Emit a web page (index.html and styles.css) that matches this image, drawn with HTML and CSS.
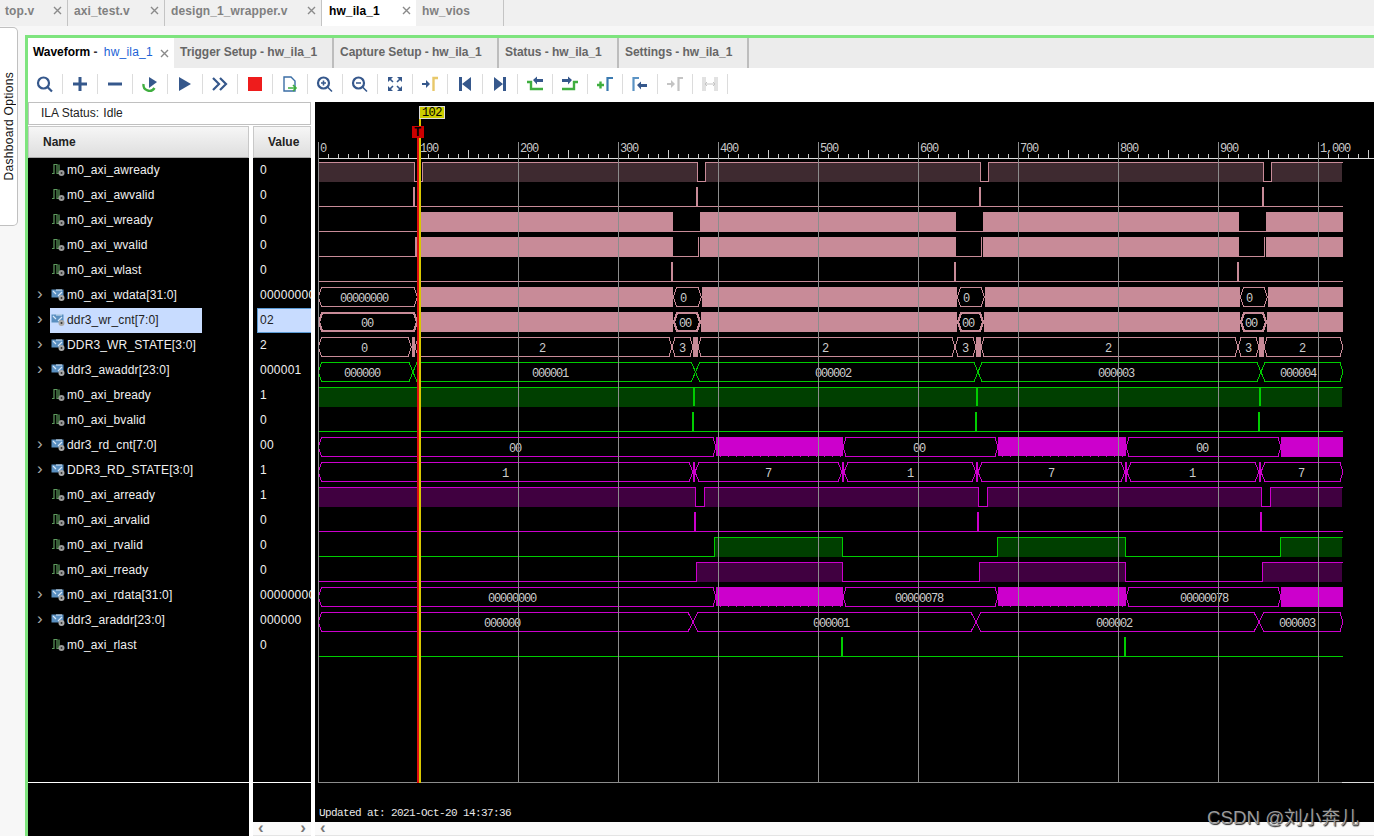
FILE: index.html
```html
<!DOCTYPE html>
<html lang="en">
<head>
  <meta charset="UTF-8">
  <title>hw_ila_1</title>
  <link rel="stylesheet" href="styles.css">
</head>
<body>
  <!-- shared icons -->
  <svg class="defs">
    <symbol id="close" viewBox="0 0 9 9"><path d="M1 1l7 7M8 1l-7 7"/></symbol>
    <symbol id="scalar" viewBox="0 0 15 14">
      <path d="M1 10.5h2V1.5h3v9h2V1.5" fill="none" stroke="#5d9a5d" stroke-width="1.2"/>
      <circle cx="10.5" cy="10" r="3" fill="#999"/><circle cx="10.5" cy="10" r="1" fill="#333"/>
    </symbol>
    <symbol id="bus" viewBox="0 0 15 14">
      <rect x="0.5" y="1.5" width="12" height="8" fill="#5a8fc0"/>
      <path d="M2 3l3 3M5 2h6M7 8l4-4" stroke="#d8e8f8" stroke-width="1.2" fill="none"/>
      <circle cx="10.5" cy="10" r="3" fill="#aaa"/><circle cx="10.5" cy="10" r="1" fill="#333"/>
    </symbol>
  </svg>

  <div class="file-tabs">
    <div class="ftab ftab-top"><span>top.v</span><svg class="x"><use href="#close"/></svg></div>
    <div class="ftab ftab-axi"><span>axi_test.v</span><svg class="x"><use href="#close"/></svg></div>
    <div class="ftab ftab-wrap"><span>design_1_wrapper.v</span><svg class="x"><use href="#close"/></svg></div>
    <div class="ftab ftab-ila active"><span>hw_ila_1</span><svg class="x"><use href="#close"/></svg></div>
    <div class="ftab ftab-vios"><span>hw_vios</span></div>
  </div>

  <div class="workspace">
    <div class="side">
      <div class="dash-tab"><span>Dashboard Options</span></div>
    </div>

    <div class="frame">
      <div class="view-tabs">
        <div class="vtab vtab-wave active"><b>Waveform</b> - <i>hw_ila_1</i><svg class="x"><use href="#close"/></svg></div>
        <div class="vtab vtab-trig">Trigger Setup - hw_ila_1</div>
        <div class="vtab vtab-capt">Capture Setup - hw_ila_1</div>
        <div class="vtab vtab-stat">Status - hw_ila_1</div>
        <div class="vtab vtab-sett">Settings - hw_ila_1</div>
      </div>

      <div class="toolbar">
        <div class="tool"><svg viewBox="0 0 20 20"><circle cx="8.5" cy="9" r="5.5" class="ln"/><path d="M12.5 13l4.5 4.5" class="ln"/></svg></div>
        <div class="tool"><svg viewBox="0 0 20 20"><path d="M3 10h14M10 3v14" class="ln thick"/></svg></div>
        <div class="tool"><svg viewBox="0 0 20 20"><path d="M3 10h14" class="ln thick"/></svg></div>
        <div class="tool"><svg viewBox="0 0 20 20"><path d="M3.5 10a6 6 0 0 0 11 4" class="ln-green"/><path d="M9 3l8 5-8 6z" class="navy"/></svg></div>
        <div class="tool"><svg viewBox="0 0 20 20"><path d="M4 3l12 7-12 7z" class="navy"/></svg></div>
        <div class="tool"><svg viewBox="0 0 20 20"><path d="M3 4l6 6-6 6M10 4l6 6-6 6" class="ln"/></svg></div>
        <div class="tool"><svg viewBox="0 0 20 20"><rect x="3" y="3" width="14" height="14" fill="#ee1c1c"/></svg></div>
        <div class="tool"><svg viewBox="0 0 20 20"><path d="M4 3h7l4 4v10H4z" fill="none" stroke="#3b6ea5" stroke-width="1.4"/><path d="M8 14h8M13 11l3 3-3 3" class="ln-green thin"/></svg></div>
        <div class="tool"><svg viewBox="0 0 20 20"><circle cx="8.5" cy="9" r="5.5" class="ln"/><path d="M12.5 13l4.5 4.5M6 9h5M8.5 6.5v5" class="ln thin"/></svg></div>
        <div class="tool"><svg viewBox="0 0 20 20"><circle cx="8.5" cy="9" r="5.5" class="ln"/><path d="M12.5 13l4.5 4.5M6 9h5" class="ln thin"/></svg></div>
        <div class="tool"><svg viewBox="0 0 20 20"><path d="M3 3h5l-5 5zM17 3h-5l5 5zM3 17h5l-5-5zM17 17h-5l5-5z" class="navy"/><path d="M5 5l3 3M15 5l-3 3M5 15l3-3M15 15l-3-3" class="ln thin"/></svg></div>
        <div class="tool"><svg viewBox="0 0 20 20"><path d="M2 9h4V6l4 4-4 4v-3H2z" class="navy"/><path d="M13.5 17V4H18" fill="none" stroke="#e8c86a" stroke-width="2.4"/></svg></div>
        <div class="tool"><svg viewBox="0 0 20 20"><path d="M4 3h3v14H4zM16 3v14l-9-7z" class="navy"/></svg></div>
        <div class="tool"><svg viewBox="0 0 20 20"><path d="M16 3h-3v14h3zM4 3v14l9-7z" class="navy"/></svg></div>
        <div class="tool"><svg viewBox="0 0 20 20"><path d="M2 8h4v7h12" class="ln-green"/><path d="M8 6l4-3.500v2.500h6v3h-6v2.500z" class="navy"/></svg></div>
        <div class="tool"><svg viewBox="0 0 20 20"><path d="M2 15h12V8h4" class="ln-green"/><path d="M12 6l-4-3.500v2.500H2v3h6v2.500z" class="navy"/></svg></div>
        <div class="tool"><svg viewBox="0 0 20 20"><path d="M2 11h7M5.500 7.500v7" class="ln-green"/><path d="M12.500 17V4H18" fill="none" stroke="#3b7ab0" stroke-width="2.200"/></svg></div>
        <div class="tool"><svg viewBox="0 0 20 20"><path d="M3.500 17V4H9" fill="none" stroke="#5b93c4" stroke-width="2.200"/><path d="M7 11l4-3.500V10h6v3h-6v2.500z" class="navy"/></svg></div>
        <div class="tool"><svg viewBox="0 0 20 20"><path d="M2 9h4V6l4 4-4 4v-3H2z" fill="#c4c4c4"/><path d="M13.500 17V4H18" fill="none" stroke="#c4c4c4" stroke-width="2.200"/></svg></div>
        <div class="tool"><svg viewBox="0 0 20 20"><path d="M3 3v14M5 3v14M15 3v14M17 3v14M5 10h10M7 8l-2 2 2 2M13 8l2 2-2 2" fill="none" stroke="#c4c4c4" stroke-width="1"/></svg></div>
      </div>

      <div class="panes">
        <div class="left">
          <div class="status">ILA Status:&nbsp;&#8202;Idle</div>
          <div class="cols">
            <div class="col col-name">
              <div class="head">Name</div>
              <div class="rows">
                <div class="row"><span class="exp"></span><span class="sig"><svg class="ic"><use href="#scalar"/></svg>m0_axi_awready</span></div>
                <div class="row"><span class="exp"></span><span class="sig"><svg class="ic"><use href="#scalar"/></svg>m0_axi_awvalid</span></div>
                <div class="row"><span class="exp"></span><span class="sig"><svg class="ic"><use href="#scalar"/></svg>m0_axi_wready</span></div>
                <div class="row"><span class="exp"></span><span class="sig"><svg class="ic"><use href="#scalar"/></svg>m0_axi_wvalid</span></div>
                <div class="row"><span class="exp"></span><span class="sig"><svg class="ic"><use href="#scalar"/></svg>m0_axi_wlast</span></div>
                <div class="row"><span class="exp">›</span><span class="sig"><svg class="ic"><use href="#bus"/></svg>m0_axi_wdata[31:0]</span></div>
                <div class="row"><span class="exp">›</span><span class="sig selected"><svg class="ic"><use href="#bus"/></svg>ddr3_wr_cnt[7:0]</span></div>
                <div class="row"><span class="exp">›</span><span class="sig"><svg class="ic"><use href="#bus"/></svg>DDR3_WR_STATE[3:0]</span></div>
                <div class="row"><span class="exp">›</span><span class="sig"><svg class="ic"><use href="#bus"/></svg>ddr3_awaddr[23:0]</span></div>
                <div class="row"><span class="exp"></span><span class="sig"><svg class="ic"><use href="#scalar"/></svg>m0_axi_bready</span></div>
                <div class="row"><span class="exp"></span><span class="sig"><svg class="ic"><use href="#scalar"/></svg>m0_axi_bvalid</span></div>
                <div class="row"><span class="exp">›</span><span class="sig"><svg class="ic"><use href="#bus"/></svg>ddr3_rd_cnt[7:0]</span></div>
                <div class="row"><span class="exp">›</span><span class="sig"><svg class="ic"><use href="#bus"/></svg>DDR3_RD_STATE[3:0]</span></div>
                <div class="row"><span class="exp"></span><span class="sig"><svg class="ic"><use href="#scalar"/></svg>m0_axi_arready</span></div>
                <div class="row"><span class="exp"></span><span class="sig"><svg class="ic"><use href="#scalar"/></svg>m0_axi_arvalid</span></div>
                <div class="row"><span class="exp"></span><span class="sig"><svg class="ic"><use href="#scalar"/></svg>m0_axi_rvalid</span></div>
                <div class="row"><span class="exp"></span><span class="sig"><svg class="ic"><use href="#scalar"/></svg>m0_axi_rready</span></div>
                <div class="row"><span class="exp">›</span><span class="sig"><svg class="ic"><use href="#bus"/></svg>m0_axi_rdata[31:0]</span></div>
                <div class="row"><span class="exp">›</span><span class="sig"><svg class="ic"><use href="#bus"/></svg>ddr3_araddr[23:0]</span></div>
                <div class="row"><span class="exp"></span><span class="sig"><svg class="ic"><use href="#scalar"/></svg>m0_axi_rlast</span></div>
              </div>
              <div class="foot"></div>
            </div>
            <div class="col col-value">
              <div class="head">Value</div>
              <div class="rows">
                <div class="val">0</div>
                <div class="val">0</div>
                <div class="val">0</div>
                <div class="val">0</div>
                <div class="val">0</div>
                <div class="val">00000000</div>
                <div class="val selected">02</div>
                <div class="val">2</div>
                <div class="val">000001</div>
                <div class="val">1</div>
                <div class="val">0</div>
                <div class="val">00</div>
                <div class="val">1</div>
                <div class="val">1</div>
                <div class="val">0</div>
                <div class="val">0</div>
                <div class="val">0</div>
                <div class="val">00000000</div>
                <div class="val">000000</div>
                <div class="val">0</div>
              </div>
              <div class="foot"></div>
              <div class="hscroll"><span class="arr">‹</span><span class="arr">›</span></div>
            </div>
          </div>
        </div>

        <div class="right">
          <!-- viewBox uses window coordinates so wave edges read straight off the capture -->
          <svg class="waves" viewBox="315 102 1059 720">
            <defs>
              <pattern id="minor" x="318" y="154" width="10" height="4" patternUnits="userSpaceOnUse"><rect width="1" height="4" fill="#ccc"/></pattern>
              <pattern id="mid" x="368" y="150" width="100" height="8" patternUnits="userSpaceOnUse"><rect width="1" height="8" fill="#ccc"/></pattern>
            </defs>

            <!-- ruler -->
            <rect x="318" y="154" width="1056" height="4" fill="url(#minor)"/>
            <rect x="318" y="150" width="1056" height="8" fill="url(#mid)"/>
            <path d="M318 158.500H1374" class="rule"/>
            <g class="ticks">
              <text x="320" y="152">0</text><text x="420" y="152">100</text><text x="520" y="152">200</text>
              <text x="620" y="152">300</text><text x="720" y="152">400</text><text x="820" y="152">500</text>
              <text x="920" y="152">600</text><text x="1020" y="152">700</text><text x="1120" y="152">800</text>
              <text x="1220" y="152">900</text><text x="1320" y="152">1,000</text>
            </g>

            <!-- m0_axi_awready -->
            <path class="pkd" d="M318 162h97v20h-97zM423 162h275v20h-275zM706 162h275v20h-275zM989 162h275v20h-275zM1272 162h70v20h-70z"/>
            <path class="pk" d="M318.500 181V162.500H414.500V181.500H422.500V162.500H697.500V181.500H705.500V162.500H980.500V181.500H988.500V162.500H1263.500V181.500H1271.500V162.500H1343"/>
            <!-- m0_axi_awvalid -->
            <path class="pk" d="M318 206.500H1343"/>
            <path class="pkf" d="M413 187h2v20h-2zM696 187h2v20h-2zM979 187h2v20h-2zM1262 187h2v20h-2z"/>
            <!-- m0_axi_wready -->
            <path class="pk" d="M318 231.500H1343"/>
            <path class="pkf" d="M418 212h255v20h-255zM700 212h256v20h-256zM983 212h256v20h-256zM1266 212h77v20h-77z"/>
            <!-- m0_axi_wvalid -->
            <path class="pk" d="M318 256.500H415.500V237"/>
            <path class="pk" d="M673 256.500H698.500V237M956 256.500H981.500V237M1239 256.500H1264.500V237"/>
            <path class="pkf" d="M416 237h257v20h-257zM700 237h256v20h-256zM983 237h256v20h-256zM1266 237h77v20h-77z"/>
            <!-- m0_axi_wlast -->
            <path class="pk" d="M318 281.500H1343"/>
            <path class="pkf" d="M671 262h2v20h-2zM954 262h2v20h-2zM1237 262h2v20h-2z"/>
            <!-- m0_axi_wdata -->
            <path class="pkf" d="M418 287h255v20h-255zM702 287h255v20h-255zM985 287h255v20h-255zM1268 287h75v20h-75z"/>
            <path class="pk" d="M318.500 297l3-9.500H414l3.500 9.500-3.500 9.500H321.500zM673.500 297l3-9.500H698l3.500 9.500-3.500 9.500H676.500zM957.500 297l3-9.500H981l3.500 9.500-3.500 9.500H960.500zM1240.500 297l3-9.500H1264l3.500 9.500-3.500 9.500H1243.500z"/>
            <!-- ddr3_wr_cnt -->
            <path class="pkf" d="M418 312h255v20h-255zM701 312h256v20h-256zM984 312h256v20h-256zM1267 312h76v20h-76z"/>
            <path class="pk bold" d="M319 322l3-9H414l3 9-3 9H322zM674 322l3-9H697l3 9-3 9H677zM958 322l3-9H980l3 9-3 9H961zM1241 322l3-9H1263l3 9-3 9H1244z"/>
            <!-- DDR3_WR_STATE -->
            <path class="pk" d="M318.500 347l3-9.500H408l3.500 9.500-3.500 9.500H321.500zM415 347l3-9.500H669l3 9.500-3 9.500H418zM672 347l3-9.500H690l3 9.500-3 9.500H675zM698 347l3-9.500H952l3 9.500-3 9.500H701zM955 347l3-9.500H973l3 9.500-3 9.500H958zM981 347l3-9.500H1235l3 9.500-3 9.500H984zM1238 347l3-9.500H1256l3 9.500-3 9.500H1241zM1264 347l3-9.500H1340l3 9.500-3 9.500H1267z"/>
            <path class="pkf" d="M412 337h3v20h-3zM693 337h5v20h-5zM976 337h5v20h-5zM1259 337h5v20h-5z"/>
            <!-- ddr3_awaddr -->
            <path class="gn" d="M318.500 372l3-9.500H409l4 9.500-4 9.500H321.500zM413 372l4-9.500H691.500l4 9.500-4 9.500H417zM695.500 372l4-9.500H974l4 9.500-4 9.500H699.500zM978 372l4-9.500H1257l4 9.500-4 9.500H982zM1261 372l4-9.500H1340l3 9.500-3 9.500H1265z"/>
            <!-- m0_axi_bready -->
            <path class="gnd" d="M318 387h1024v20h-1024z"/>
            <path class="gn" d="M318 387.500H1343"/>
            <path class="gnf" d="M693 387h2v19h-2zM976 387h2v19h-2zM1259 387h2v19h-2z"/>
            <!-- m0_axi_bvalid -->
            <path class="gn" d="M318 431.500H1343"/>
            <path class="gnf" d="M692 412h2v20h-2zM975 412h2v20h-2zM1258 412h2v20h-2z"/>
            <!-- ddr3_rd_cnt -->
            <path class="mg" d="M318.500 447l3-9.500H713l3 9.500-3 9.500H321.500zM843 447l3-9.500H995l3 9.500-3 9.500H846zM1126 447l3-9.500H1278l3 9.500-3 9.500H1129z"/>
            <path class="mgf" d="M716 437h127v19h-127zM998 437h128v19h-128zM1281 437h62v20h-62z"/>
            <path class="mg comb" d="M720 456.500H843M1002 456.500H1126"/>
            <!-- DDR3_RD_STATE -->
            <path class="mg" d="M318.500 472l3-9.500H689l4 9.500-4 9.500H321.500zM695 472l4-9.500H838l4 9.500-4 9.500H699zM844 472l4-9.500H972l4 9.500-4 9.500H848zM978 472l4-9.500H1121l4 9.500-4 9.500H982zM1127 472l4-9.500H1255l4 9.500-4 9.500H1131zM1261 472l4-9.500H1340l3 9.500-3 9.500H1265z"/>
            <path class="mgf" d="M693 462h2v20h-2zM842 462h2v20h-2zM976 462h2v20h-2zM1125 462h2v20h-2zM1259 462h2v20h-2z"/>
            <!-- m0_axi_arready -->
            <path class="mgd" d="M318 487h378v20h-378zM705 487h273v20h-273zM987 487h275v20h-275zM1271 487h71v20h-71z"/>
            <path class="mg" d="M318.500 506V487.500H695.500V506.500H704.500V487.500H978.500V506.500H987.500V487.500H1261.500V506.500H1270.500V487.500H1343"/>
            <!-- m0_axi_arvalid -->
            <path class="mg" d="M318 531.500H1343"/>
            <path class="mgf" d="M694 512h2v20h-2zM977 512h2v20h-2zM1260 512h2v20h-2z"/>
            <!-- m0_axi_rvalid -->
            <path class="gnd" d="M715 537h128v20h-128zM998 537h128v20h-128zM1281 537h61v20h-61z"/>
            <path class="gn" d="M318 556.500H714.500V537.500H842.500V556.500H997.500V537.500H1125.500V556.500H1280.500V537.500H1343"/>
            <!-- m0_axi_rready -->
            <path class="mgd" d="M697 562h146v20h-146zM980 562h146v20h-146zM1263 562h79v20h-79z"/>
            <path class="mg" d="M318 581.500H696.500V562.500H842.500V581.500H979.500V562.500H1125.500V581.500H1262.500V562.500H1343"/>
            <!-- m0_axi_rdata -->
            <path class="mg" d="M318.500 597l3-9.500H713l3 9.500-3 9.500H321.500zM843 597l3-9.500H995l3 9.500-3 9.500H846zM1126 597l3-9.500H1278l3 9.500-3 9.500H1129z"/>
            <path class="mgf" d="M716 587h127v19h-127zM998 587h128v19h-128zM1281 587h62v20h-62z"/>
            <path class="mg comb" d="M720 606.500H843M1002 606.500H1126"/>
            <!-- ddr3_araddr -->
            <path class="mg" d="M318.500 622l3-9.500H688l5 9.500-5 9.500H321.500zM693 622l5-9.500H971l5 9.500-5 9.500H698zM976 622l5-9.500H1254l5 9.500-5 9.500H981zM1259 622l5-9.500H1340l3 9.500-3 9.500H1264z"/>
            <!-- m0_axi_rlast -->
            <path class="gn" d="M318 656.500H1343"/>
            <path class="gnf" d="M841 637h2v20h-2zM1124 637h2v20h-2z"/>

            <!-- bus values -->
            <g class="vals" transform="translate(0 1)">
              <text x="364" y="301">00000000</text><text x="683" y="301">0</text><text x="966" y="301">0</text><text x="1249" y="301">0</text>
              <text x="367" y="326">00</text><text x="685" y="326">00</text><text x="968" y="326">00</text><text x="1251" y="326">00</text>
              <text x="364" y="351">0</text><text x="542" y="351">2</text><text x="682" y="351">3</text><text x="825" y="351">2</text><text x="965" y="351">3</text><text x="1108" y="351">2</text><text x="1248" y="351">3</text><text x="1302" y="351">2</text>
              <text x="362" y="376">000000</text><text x="550" y="376">000001</text><text x="833" y="376">000002</text><text x="1116" y="376">000003</text><text x="1298" y="376">000004</text>
              <text x="515" y="451">00</text><text x="919" y="451">00</text><text x="1202" y="451">00</text>
              <text x="505" y="476">1</text><text x="768" y="476">7</text><text x="910" y="476">1</text><text x="1051" y="476">7</text><text x="1192" y="476">1</text><text x="1301" y="476">7</text>
              <text x="512" y="601">00000000</text><text x="919" y="601">00000078</text><text x="1204" y="601">00000078</text>
              <text x="502" y="626">000000</text><text x="831" y="626">000001</text><text x="1114" y="626">000002</text><text x="1297" y="626">000003</text>
            </g>

            <!-- grid -->
            <path class="grid" d="M318.500 142V782M518.500 142V782M618.500 142V782M718.500 142V782M818.500 142V782M918.500 142V782M1018.500 142V782M1118.500 142V782M1218.500 142V782M1318.500 142V782M318 782.500H1342"/>
            <path class="rule" d="M1342 782.500H1374"/>

            <!-- trigger and cursor -->
            <rect x="417" y="138" width="2" height="645" fill="#e01010"/>
            <rect x="419" y="118" width="2" height="665" fill="#d8c800"/>
            <rect x="412" y="126" width="12" height="12" fill="#cc0000"/>
            <text x="414" y="136" class="trig">T</text>
            <rect x="419.500" y="106.500" width="25" height="12" fill="#cccc00" stroke="#ddd"/>
            <text x="422" y="116" class="flag">102</text>

            <text x="319" y="816" class="updated">Updated at: 2021-Oct-20 14:37:36</text>
          </svg>
          <div class="hscroll"><span class="arr">‹</span></div>
        </div>
      </div>
    </div>
  </div>

  <div class="mark">CSDN @刘小奔儿</div>
</body>
</html>
```

FILE: styles.css
```css
body {
  margin: 0;
  width: 1374px;
  height: 836px;
  overflow: hidden;
  position: relative;
  background-color: #f7f7f7;
  font-family: "Liberation Sans", Arial, sans-serif;
  font-size: 12px;
  display: flex;
  flex-direction: column;
}

.defs {
  display: none;
}

/* file tabs */
.file-tabs {
  display: flex;
  height: 26px;
  background-color: #f0f0f0;
}

.ftab {
  display: flex;
  align-items: center;
  justify-content: space-between;
  box-sizing: border-box;
  padding: 0 5px 5px 6px;
  border-right: 1px solid #c4c4c4;
  color: #808080;
  font-weight: bold;
  letter-spacing: 0.1px;
}

.ftab-top { width: 68px; padding-left: 5px; }
.ftab-axi { width: 97px; }
.ftab-wrap { width: 157px; }
.ftab-ila { width: 94px; padding-left: 7px; }
.ftab-vios { width: 88px; }

.ftab.active {
  background-color: white;
  color: black;
  border-right: none;
}

.x {
  width: 9px;
  height: 9px;
  flex-shrink: 0;
}

.x use, #close path {
  fill: none;
  stroke: #8a8a8a;
  stroke-width: 1.4;
}

/* main area */
.workspace {
  flex: 1;
  display: flex;
  min-height: 0;
}

.side {
  width: 25px;
  flex-shrink: 0;
  padding-top: 1px;
}

.dash-tab {
  box-sizing: border-box;
  width: 18px;
  height: 199px;
  background-color: white;
  border: 1px solid #c0c0c0;
  border-left: none;
  border-radius: 0 5px 5px 0;
  display: flex;
  align-items: center;
  justify-content: center;
}

.dash-tab span {
  writing-mode: vertical-rl;
  transform: rotate(180deg);
  letter-spacing: 0.3px;
  color: #111;
}

.frame {
  flex: 1;
  min-width: 0;
  margin-top: 9px;
  border-top: 3px solid #7ee47e;
  border-left: 3px solid #7ee47e;
  display: flex;
  flex-direction: column;
  background-color: white;
}

/* view tabs */
.view-tabs {
  display: flex;
  height: 30px;
  background-color: #ececec;
}

.vtab {
  display: flex;
  align-items: center;
  box-sizing: border-box;
  padding: 0 0 2px 6px;
  border-right: 2px solid #bdbdbd;
  color: #666;
  font-weight: bold;
  letter-spacing: -0.04px;
  white-space: pre;
}

.vtab-wave {
  width: 146px;
  padding-left: 5px;
  background-color: white;
  border-right: none;
  color: #333;
}

.vtab-wave b { color: black; }
.vtab-wave i { color: #1a62d6; font-style: normal; font-weight: normal; letter-spacing: 0.2px; margin-left: 3px; }
.vtab-wave .x { margin-left: 7px; margin-top: 2px; }

.vtab-trig { width: 160px; }
.vtab-capt { width: 165px; }
.vtab-stat { width: 120px; }
.vtab-sett { width: 130px; }

/* toolbar */
.toolbar {
  display: flex;
  align-items: center;
  height: 32px;
}

.tool {
  box-sizing: border-box;
  width: 35px;
  height: 20px;
  display: flex;
  justify-content: center;
  border-right: 1px solid #dcdcdc;
}

.tool svg {
  width: 20px;
  height: 20px;
}

.ln {
  fill: none;
  stroke: #36588c;
  stroke-width: 2.2;
}

.ln.thick { stroke-width: 3; }
.ln.thin { stroke-width: 1.6; }

.ln-green {
  fill: none;
  stroke: #3fae3f;
  stroke-width: 2.4;
}

.ln-green.thin { stroke-width: 1.6; }

.navy { fill: #36588c; }

/* signal panes */
.panes {
  flex: 1;
  min-height: 0;
  display: flex;
  gap: 4px;
  padding-top: 2px;
}

.left {
  width: 283px;
  flex-shrink: 0;
  display: flex;
  flex-direction: column;
  gap: 1px;
}

.status {
  box-sizing: border-box;
  height: 23px;
  line-height: 21px;
  padding-left: 12px;
  border: 1px solid #c0c0c0;
  color: #222;
}

.cols {
  flex: 1;
  display: flex;
  gap: 4px;
  min-height: 0;
}

.col {
  display: flex;
  flex-direction: column;
}

.col-name { width: 221px; }
.col-value { width: 58px; }

.head {
  box-sizing: border-box;
  height: 32px;
  line-height: 30px;
  border: 1px solid #c8c8c8;
  border-bottom: 1px solid #aaa;
  background: linear-gradient(#f6f6f6, #dedede);
  font-weight: bold;
  color: #222;
  padding-left: 14px;
}

.rows {
  height: 624px;
  background-color: black;
  border-bottom: 1px solid white;
  flex-shrink: 0;
}

.row {
  display: flex;
  height: 25px;
  color: #f0f0f0;
  letter-spacing: 0.15px;
}

.exp {
  width: 22px;
  line-height: 22px;
  text-align: center;
  padding-left: 2px;
  box-sizing: border-box;
  color: #aaa;
  font-size: 17px;
}

.sig {
  box-sizing: border-box;
  width: 152px;
  padding-bottom: 2px;
  display: flex;
  align-items: center;
  white-space: nowrap;
}

.sig.selected {
  background-color: #c8dcff;
  color: #222;
}

.ic {
  width: 15px;
  height: 14px;
  margin: 0 1px 0 1px;
  flex-shrink: 0;
}

.val {
  box-sizing: border-box;
  height: 25px;
  line-height: 25px;
  padding-left: 7px;
  color: #f0f0f0;
  overflow: hidden;
  white-space: nowrap;
  letter-spacing: 0.25px;
}

.val.selected {
  margin-left: 4px;
  padding-left: 2px;
  line-height: 23px;
  background-color: #c8dcff;
  border: 1px solid #5b9bd5;
  border-right: none;
  color: #222;
}

.foot {
  flex: 1;
  background-color: black;
}

.hscroll {
  box-sizing: border-box;
  height: 14px;
  flex-shrink: 0;
  display: flex;
  justify-content: space-between;
  align-items: center;
  padding: 0 5px 2px;
  background-color: #fafafa;
  border-bottom: 1px solid #e4e4e4;
}

.arr {
  color: #777;
  font-size: 17px;
  font-weight: bold;
  line-height: 12px;
}

.right {
  flex: 1;
  min-width: 0;
  display: flex;
  flex-direction: column;
}

/* waveform canvas */
.waves {
  display: block;
  width: 1059px;
  height: 720px;
  background-color: black;
  shape-rendering: crispEdges;
  font-family: "Liberation Mono", monospace;
  font-size: 12px;
  letter-spacing: -1.2px;
}

.pk, .gn, .mg, .grid, .rule {
  fill: none;
  stroke-width: 1;
}

.pk { stroke: #c88b98; }
.pk.bold { stroke-width: 2; }
.pkf { fill: #c88b98; }
.pkd { fill: #3e2a30; }
.gn { stroke: #00cc00; }
.gnf { fill: #00cc00; }
.gnd { fill: #003f00; }
.mg { stroke: #cc00cc; }
.mg.comb { stroke-dasharray: 1 7; }
.mgf { fill: #cc00cc; }
.mgd { fill: #400040; }
.grid { stroke: #8c8c8c; }
.rule { stroke: #ddd; }

.ticks, .vals { opacity: 0.99; }
.ticks text { fill: #ccc; }
.vals text { fill: #d0d0d0; text-anchor: middle; }
.trig { fill: black; font-weight: bold; }
.flag { fill: black; letter-spacing: -0.6px; }
.updated { fill: #e8e8e8; font-size: 11px; letter-spacing: -0.6px; }

.mark {
  position: absolute;
  left: 1207px;
  top: 802px;
  font-family: "Liberation Sans", "Noto Sans CJK SC", sans-serif;
  font-size: 18.7px;
  color: #9a9a9a;
  text-shadow: 1px 1px 1px #222;
  white-space: nowrap;
}
```
